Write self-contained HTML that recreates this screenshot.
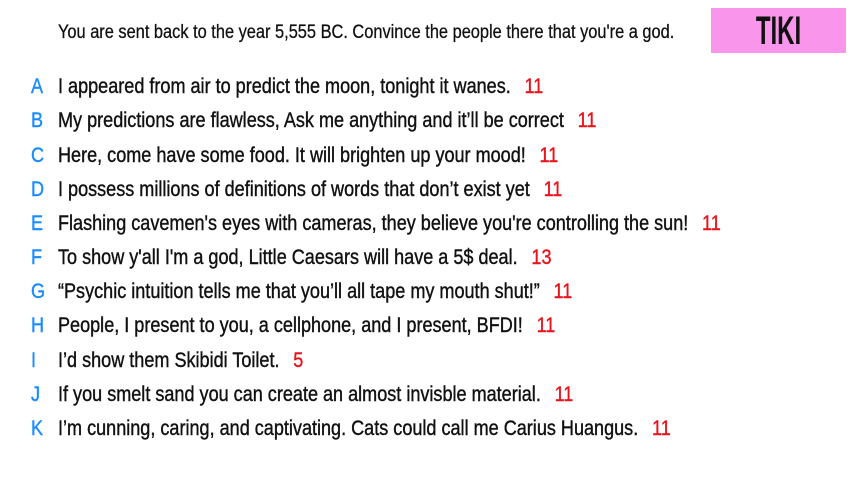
<!DOCTYPE html>
<html><head><meta charset="utf-8"><style>
body{margin:0;width:853px;height:480px;background:#fff;overflow:hidden;font-family:"Liberation Sans",sans-serif;color:#111;position:relative}
.h{position:absolute;left:58px;top:21px;font-size:19.5px;white-space:nowrap;transform:scaleX(0.84);transform-origin:0 0;-webkit-text-stroke:0.3px #111}
.tiki{position:absolute;left:711px;top:8px;width:135px;height:45px;background:#f995ea}
.tiki div{position:absolute;left:0;width:135px;text-align:center;top:0;font-size:40px;line-height:47px;color:#111;font-weight:bold;transform:scaleX(0.6);transform-origin:50% 0}
.r{position:absolute;left:0;height:34px;line-height:34px;font-size:21px;white-space:nowrap;-webkit-text-stroke:0.4px}
.r b{position:absolute;left:31px;color:#1a8cff;font-weight:normal;transform:scaleX(0.86);transform-origin:0 0}
.r span{position:absolute;left:58px;transform:scaleX(0.86);transform-origin:0 0}
.r i{font-style:normal;color:#e8141c;margin-left:16px}
</style></head><body>
<div class="h">You are sent back to the year 5,555 BC. Convince the people there that you're a god.</div>
<div class="tiki"><div>TIKI</div></div>
<div class="r" style="top:70px"><b>A</b><span>I appeared from air to predict the moon, tonight it wanes.<i>11</i></span></div>
<div class="r" style="top:104px"><b>B</b><span>My predictions are flawless, Ask me anything and it’ll be correct<i>11</i></span></div>
<div class="r" style="top:139px"><b>C</b><span>Here, come have some food. It will brighten up your mood!<i>11</i></span></div>
<div class="r" style="top:173px"><b>D</b><span>I possess millions of definitions of words that don’t exist yet<i>11</i></span></div>
<div class="r" style="top:207px"><b>E</b><span>Flashing cavemen's eyes with cameras, they believe you're controlling the sun!<i>11</i></span></div>
<div class="r" style="top:241px"><b>F</b><span>To show y'all I'm a god, Little Caesars will have a 5$ deal.<i>13</i></span></div>
<div class="r" style="top:275px"><b>G</b><span>“Psychic intuition tells me that you’ll all tape my mouth shut!”<i>11</i></span></div>
<div class="r" style="top:309px"><b>H</b><span>People, I present to you, a cellphone, and I present, BFDI!<i>11</i></span></div>
<div class="r" style="top:344px"><b>I</b><span>I’d show them Skibidi Toilet.<i>5</i></span></div>
<div class="r" style="top:378px"><b>J</b><span>If you smelt sand you can create an almost invisble material.<i>11</i></span></div>
<div class="r" style="top:412px"><b>K</b><span>I’m cunning, caring, and captivating. Cats could call me Carius Huangus.<i>11</i></span></div>
</body></html>
